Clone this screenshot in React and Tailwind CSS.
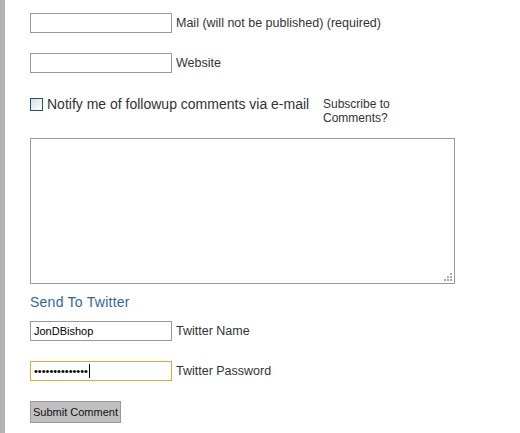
import React from 'react';

// Comment form, old-school blog style
function Field({ label, value = '' }) {
  return (
    <div className="flex items-center">
      <input
        type="text"
        defaultValue={value}
        className="w-[142px] h-[20px] border border-[#999] bg-white px-[3px] text-[11px] text-black outline-none"
      />
      <span className="ml-[4px] text-[12.5px] text-[#333]">{label}</span>
    </div>
  );
}

export default function App() {
  return (
    <div className="min-h-screen h-[433px] bg-white border-l-[5px] border-[#b3b3b3] pl-[25px] pt-[13px] font-['Liberation_Sans',Arial,sans-serif]">
      <Field label="Mail (will not be published) (required)" />
      <div className="mt-[20px]">
        <Field label="Website" />
      </div>

      <div className="mt-[24px] flex items-start">
        <div className="flex items-center w-[293px]">
          <span className="block w-[13px] h-[13px] border border-[#1c5180] bg-gradient-to-br from-[#dcdcd7] to-white" />
          <span className="ml-[4px] text-[14px] leading-[15px] text-[#333]">
            Notify me of followup comments via e-mail
          </span>
        </div>
        <div className="text-[12px] leading-[14px] text-[#333]">
          Subscribe to
          <br />
          Comments?
        </div>
      </div>

      <div className="relative mt-[13px] w-[425px]">
        <textarea className="block w-[425px] h-[146px] border border-[#999] bg-white outline-none resize-none" />
        <svg className="absolute right-[3px] bottom-[3px]" width="9" height="9" viewBox="0 0 9 9">
          <g fill="#aaa">
            <rect x="7" y="1" width="2" height="2" />
            <rect x="4" y="4" width="2" height="2" />
            <rect x="7" y="4" width="2" height="2" />
            <rect x="1" y="7" width="2" height="2" />
            <rect x="4" y="7" width="2" height="2" />
            <rect x="7" y="7" width="2" height="2" />
          </g>
        </svg>
      </div>

      <div className="mt-[10px] text-[14px] tracking-[0.25px] leading-[16px] text-[#336699]">Send To Twitter</div>

      <div className="mt-[11px]">
        <Field label="Twitter Name" value="JonDBishop" />
      </div>

      <div className="mt-[20px] flex items-center">
        <div className="flex items-center w-[142px] h-[20px] border border-[#e0a93c] bg-white px-[3px]">
          <span className="text-[11px] text-black leading-none">••••••••••••••</span>
          <span className="ml-[1px] w-[1px] h-[14px] bg-black" />
        </div>
        <span className="ml-[4px] text-[12.5px] text-[#333]">Twitter Password</span>
      </div>

      <button className="mt-[20px] flex items-center justify-center w-[91px] h-[22px] px-0 whitespace-nowrap bg-[#c0c0c0] border border-[#999] text-[11px] text-[#111]">
        Submit Comment
      </button>
    </div>
  );
}
